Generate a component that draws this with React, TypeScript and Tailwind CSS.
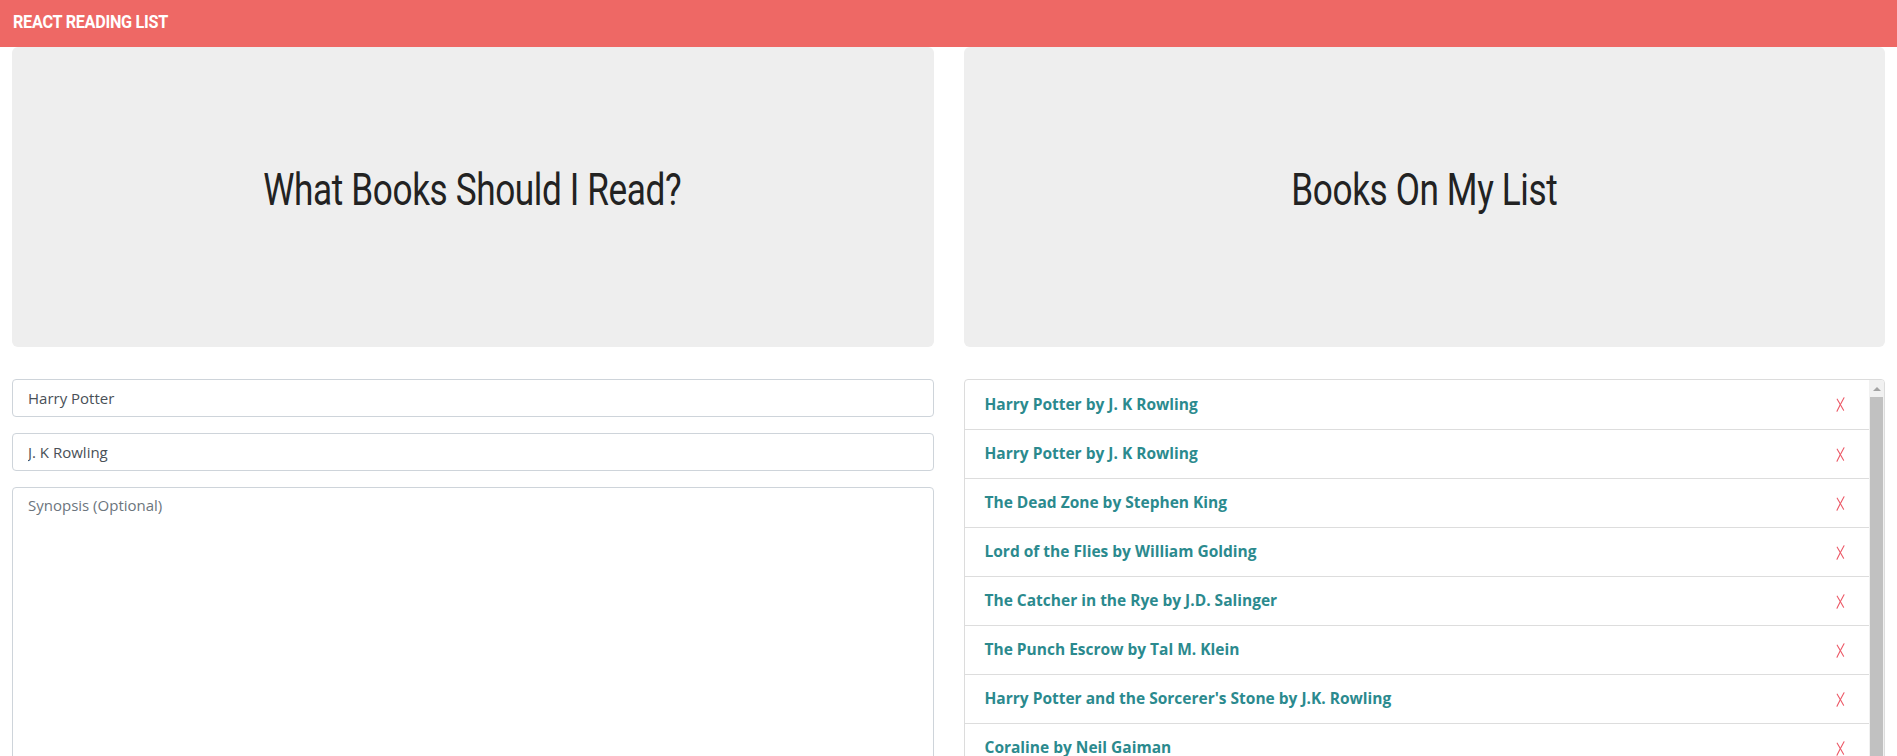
import React from "react";

const books = [
  "Harry Potter by J. K Rowling",
  "Harry Potter by J. K Rowling",
  "The Dead Zone by Stephen King",
  "Lord of the Flies by William Golding",
  "The Catcher in the Rye by J.D. Salinger",
  "The Punch Escrow by Tal M. Klein",
  "Harry Potter and the Sorcerer's Stone by J.K. Rowling",
  "Coraline by Neil Gaiman",
  "It by Stephen King",
  "The Hobbit by J.R.R. Tolkien",
];

function XMark() {
  return (
    <svg width="9" height="15" viewBox="0 0 9 15" fill="none" stroke="#ec5866" strokeWidth="1.1" strokeLinecap="round">
      <path d="M8 0.8 C 6 4.5, 3.5 9, 1 14.2" />
      <path d="M1.2 2.2 C 3.5 6, 5.5 9.5, 7.6 13.2" />
    </svg>
  );
}

export default function App() {
  const cond = { fontFamily: 'Roboto, "Liberation Sans", sans-serif' };
  return (
    <div className="h-screen overflow-hidden bg-white" style={{ fontFamily: '"Open Sans", "Noto Sans", sans-serif' }}>
      <header className="h-[47px] bg-[#ee6865] flex items-center px-[13px] pb-[4px]">
        <span className="inline-block origin-left scale-x-[0.9] text-white text-[18px] font-bold tracking-[-0.3px]" style={cond}>REACT READING LIST</span>
      </header>
      <div className="grid grid-cols-2 gap-[30px] px-[12px]">
        <div className="flex flex-col">
          <div className="h-[300px] bg-[#eeeeee] rounded-[6px] flex items-center justify-center pb-[14px] mb-[32px]">
            <h1 className="inline-block scale-x-[0.8] text-[44px] font-normal text-[#222] tracking-[-0.5px]" style={cond}>What Books Should I Read?</h1>
          </div>
          <input
            className="h-[38px] w-full border border-[#ced4da] rounded-[4px] px-[15px] text-[15px] text-[#495057] outline-none"
            defaultValue="Harry Potter"
          />
          <input
            className="h-[38px] w-full border border-[#ced4da] rounded-[4px] px-[15px] text-[15px] text-[#495057] outline-none mt-[16px]"
            defaultValue="J. K Rowling"
          />
          <textarea
            className="h-[320px] w-full border border-[#ced4da] rounded-[4px] px-[15px] py-[6px] text-[15px] text-[#495057] placeholder:text-[#6c757d] outline-none mt-[16px] resize-none"
            placeholder="Synopsis (Optional)"
          />
        </div>
        <div className="flex flex-col">
          <div className="h-[300px] bg-[#eeeeee] rounded-[6px] flex items-center justify-center pb-[14px] mb-[32px]">
            <h1 className="inline-block scale-x-[0.8] text-[44px] font-normal text-[#222] tracking-[-0.5px]" style={cond}>Books On My List</h1>
          </div>
          <div className="h-[440px] overflow-hidden border border-[#dcdcdc] rounded-[4px] flex">
            <div className="flex-1 min-w-0">
              {books.map((b, i) => (
                <div
                  key={i}
                  className={"h-[49px] flex items-center justify-between pl-[20px] pr-[24px] " + (i > 0 ? "border-t border-[#dddddd]" : "")}
                >
                  <span className="text-[15.5px] font-bold text-[#2b8a8e] whitespace-nowrap">{b}</span>
                  <XMark />
                </div>
              ))}
            </div>
            <div className="w-[15px] bg-[#f1f1f1] flex flex-col items-center">
              <div className="h-[17px] flex items-center justify-center">
                <div className="w-0 h-0 border-l-[4px] border-r-[4px] border-b-[4px] border-l-transparent border-r-transparent border-b-[#a3a3a3]" />
              </div>
              <div className="w-[13px] h-[380px] bg-[#c1c1c1]" />
            </div>
          </div>
        </div>
      </div>
    </div>
  );
}
